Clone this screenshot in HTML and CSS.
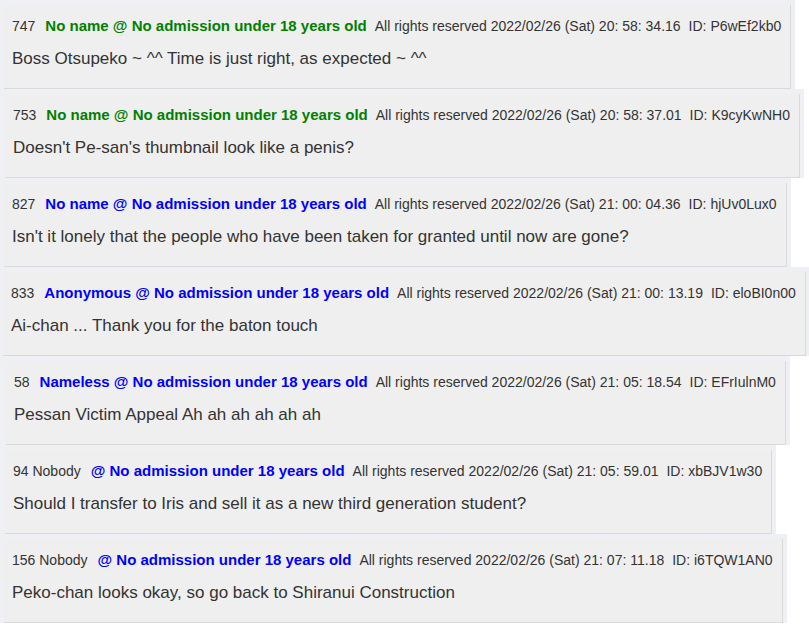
FILE: index.html
```html
<!DOCTYPE html>
<html lang="en">
<head>
<meta charset="utf-8">
<title>Thread</title>
<link rel="stylesheet" href="styles.css">
</head>
<body>
<div class="thread">
  <div class="post-wrap"><div class="post">
    <div class="head"><span class="num">747</span><span class="name green">No name @ No admission under 18 years old</span><span class="date">All rights reserved 2022/02/26 (Sat) 20: 58: 34.16</span><span class="uid">ID: P6wEf2kb0</span></div>
    <div class="body">Boss Otsupeko ~ ^^ Time is just right, as expected ~ ^^</div>
  </div></div>
  <div class="post-wrap shift1"><div class="post">
    <div class="head"><span class="num">753</span><span class="name green">No name @ No admission under 18 years old</span><span class="date">All rights reserved 2022/02/26 (Sat) 20: 58: 37.01</span><span class="uid">ID: K9cyKwNH0</span></div>
    <div class="body">Doesn't Pe-san's thumbnail look like a penis?</div>
  </div></div>
  <div class="post-wrap"><div class="post">
    <div class="head"><span class="num">827</span><span class="name blue">No name @ No admission under 18 years old</span><span class="date">All rights reserved 2022/02/26 (Sat) 21: 00: 04.36</span><span class="uid">ID: hjUv0Lux0</span></div>
    <div class="body">Isn't it lonely that the people who have been taken for granted until now are gone?</div>
  </div></div>
  <div class="post-wrap shift-1"><div class="post">
    <div class="head"><span class="num">833</span><span class="name blue">Anonymous @ No admission under 18 years old</span><span class="date">All rights reserved 2022/02/26 (Sat) 21: 00: 13.19</span><span class="uid">ID: eloBI0n00</span></div>
    <div class="body">Ai-chan ... Thank you for the baton touch</div>
  </div></div>
  <div class="post-wrap shift2"><div class="post">
    <div class="head"><span class="num">58</span><span class="name blue">Nameless @ No admission under 18 years old</span><span class="date">All rights reserved 2022/02/26 (Sat) 21: 05: 18.54</span><span class="uid">ID: EFrIulnM0</span></div>
    <div class="body">Pessan Victim Appeal Ah ah ah ah ah ah</div>
  </div></div>
  <div class="post-wrap shift1"><div class="post">
    <div class="head"><span class="num wide">94 Nobody</span><span class="name blue">@ No admission under 18 years old</span><span class="date">All rights reserved 2022/02/26 (Sat) 21: 05: 59.01</span><span class="uid">ID: xbBJV1w30</span></div>
    <div class="body">Should I transfer to Iris and sell it as a new third generation student?</div>
  </div></div>
  <div class="post-wrap"><div class="post">
    <div class="head"><span class="num wide">156 Nobody</span><span class="name blue">@ No admission under 18 years old</span><span class="date">All rights reserved 2022/02/26 (Sat) 21: 07: 11.18</span><span class="uid">ID: i6TQW1AN0</span></div>
    <div class="body">Peko-chan looks okay, so go back to Shiranui Construction</div>
  </div></div>
</div>
</body>
</html>
```
FILE: styles.css
```css
html, body {
  margin: 0;
  padding: 0;
  background: #ffffff;
}
body {
  font-family: "Liberation Sans", Arial, sans-serif;
  color: #333333;
}
.thread {
  display: flex;
  flex-direction: column;
  align-items: flex-start;
}
.post-wrap {
  background: #eff0f4;
  padding: 5px 4px 0 4px;
  height: 84px;
}
.post-wrap.shift1 { padding-left: 5px; }
.post-wrap.shift2 { padding-left: 6px; }
.post-wrap.shift-1 { padding-left: 3px; }
.post {
  box-sizing: border-box;
  height: 84px;
  background: #efefef;
  border-right: 1px solid #dadada;
  border-bottom: 1px solid #dadada;
  padding: 11px 9px 0 8px;
}
.head {
  font-size: 14px;
  line-height: 20px;
  white-space: nowrap;
  display: flex;
  align-items: baseline;
  gap: 8px;
}
.num { margin-right: 2px; }
.name {
  font-weight: bold;
  font-size: 15px;
}
.green { color: #008000; }
.blue { color: #0000ff; }
.uid { margin-left: 0; }
.body {
  font-size: 17px;
  line-height: 24px;
  margin-top: 11px;
  white-space: nowrap;
}
```
